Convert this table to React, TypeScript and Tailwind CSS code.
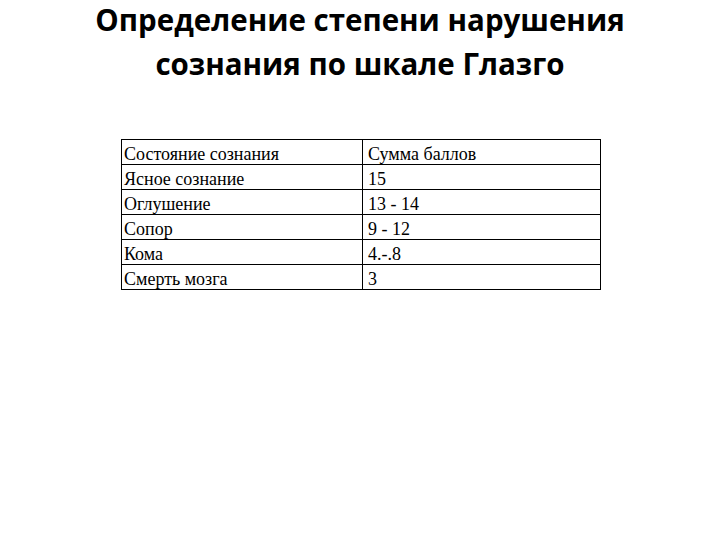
const rows: [string, string][] = [
  ["Состояние сознания", "Сумма баллов"],
  ["Ясное сознание", "15"],
  ["Оглушение", "13 - 14"],
  ["Сопор", "9 - 12"],
  ["Кома", "4.-.8"],
  ["Смерть мозга", "3"],
];

export default function App() {
  return (
    <div className="w-[720px] h-[540px] bg-white overflow-hidden">
      <h1 className="text-center text-[29.5px] leading-[40px] font-bold text-black font-['Open_Sans',sans-serif]">
        <div>Определение степени нарушения</div>
        <div className="mt-[4px]">сознания по шкале Глазго</div>
      </h1>

      <table className="mt-[55px] ml-[121px] border-collapse font-['Liberation_Serif',serif] text-[18px] text-black">
        <tbody>
          {rows.map(([state, score]) => (
            <tr key={state} className="h-[25px]">
              <td className="w-[241px] border border-black pl-[2px] pt-[3px] pb-0 align-bottom leading-[20px]">
                {state}
              </td>
              <td className="w-[238px] border border-black pl-[5px] pt-[3px] pb-0 align-bottom leading-[20px]">
                {score}
              </td>
            </tr>
          ))}
        </tbody>
      </table>
    </div>
  );
}
